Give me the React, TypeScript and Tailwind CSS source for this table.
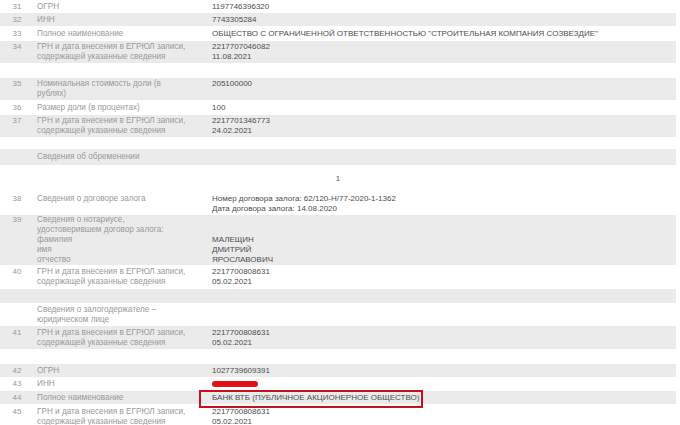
import React from 'react';

type Row = {
  n?: string;
  label?: string[];
  value?: string[];
  gray?: boolean;
  h: string;
  mark?: 'bar' | 'box';
  center?: string;
};

const NB = '\u00a0';

const ROWS: Row[] = [
  { n: '31', label: ['ОГРН'], value: ['1197746396320'], h: 'h-[13px]' },
  { n: '32', label: ['ИНН'], value: ['7743305284'], gray: true, h: 'h-[13px]' },
  { n: '33', label: ['Полное наименование'], value: ['ОБЩЕСТВО С ОГРАНИЧЕННОЙ ОТВЕТСТВЕННОСТЬЮ "СТРОИТЕЛЬНАЯ КОМПАНИЯ СОЗВЕЗДИЕ"'], h: 'h-[15px]' },
  { n: '34', label: ['ГРН и дата внесения в ЕГРЮЛ записи,', 'содержащей указанные сведения'], value: ['2217707046082', '11.08.2021'], gray: true, h: 'h-[22px]' },
  { h: 'h-[15px]' },
  { n: '35', label: ['Номинальная стоимость доли (в', 'рублях)'], value: ['205100000', NB], gray: true, h: 'h-[22px]' },
  { n: '36', label: ['Размер доли (в процентах)'], value: ['100'], h: 'h-[15px]' },
  { n: '37', label: ['ГРН и дата внесения в ЕГРЮЛ записи,', 'содержащей указанные сведения'], value: ['2217701346773', '24.02.2021'], gray: true, h: 'h-[22px]' },
  { h: 'h-[12px]' },
  { label: ['Сведения об обременении'], gray: true, h: 'h-[16px]' },
  { center: '1', h: 'h-[27px]' },
  { n: '38', label: ['Сведения о договоре залога', NB], value: ['Номер договора залога: 62/120-Н/77-2020-1-1362', 'Дата договора залога: 14.08.2020'], h: 'h-[23px]' },
  { n: '39', label: ['Сведения о нотариусе,', 'удостоверившем договор залога:', 'фамилия', 'имя', 'отчество'], value: [NB, NB, 'МАЛЕЩИН', 'ДМИТРИЙ', 'ЯРОСЛАВОВИЧ'], gray: true, h: 'h-[50px]' },
  { n: '40', label: ['ГРН и дата внесения в ЕГРЮЛ записи,', 'содержащей указанные сведения'], value: ['2217700808631', '05.02.2021'], h: 'h-[24px]' },
  { gray: true, h: 'h-[14px]' },
  { label: ['Сведения о залогодержателе –', 'юридическом лице'], h: 'h-[23px]' },
  { n: '41', label: ['ГРН и дата внесения в ЕГРЮЛ записи,', 'содержащей указанные сведения'], value: ['2217700808631', '05.02.2021'], gray: true, h: 'h-[23px]' },
  { h: 'h-[15px]' },
  { n: '42', label: ['ОГРН'], value: ['1027739609391'], gray: true, h: 'h-[13px]' },
  { n: '43', label: ['ИНН'], mark: 'bar', h: 'h-[14px]' },
  { n: '44', label: ['Полное наименование'], value: ['БАНК ВТБ (ПУБЛИЧНОЕ АКЦИОНЕРНОЕ ОБЩЕСТВО)'], mark: 'box', gray: true, h: 'h-[13px]' },
  { n: '45', label: ['ГРН и дата внесения в ЕГРЮЛ записи,', 'содержащей указанные сведения'], value: ['2217700808631', '05.02.2021'], h: 'h-[25px]' },
];

const App = () => {
  return (
    <div className="w-[680px] h-[425px] overflow-hidden bg-white font-['Liberation_Sans',Arial,sans-serif]">
      <div className="w-[676px] flex flex-col">
        {ROWS.map((row, i) => {
          const lines = Math.max(row.label?.length ?? 0, row.value?.length ?? 0);
          return (
            <div
              key={i}
              className={`flex items-center shrink-0 leading-[10px] ${row.h} ${row.gray ? 'bg-[#ebebeb]' : 'bg-white'}`}
            >
              {row.center ? (
                <div className="flex-1 text-center text-[8px] text-[#555555]">{row.center}</div>
              ) : (
                <>
                  <div className="w-[37px] pr-[3px] text-center text-[8px] text-[#9a9a9a]">
                    {row.n &&
                      Array.from({ length: lines }).map((_, j) => (
                        <div key={j}>{j === 0 ? row.n : NB}</div>
                      ))}
                  </div>
                  <div className="w-[175px] text-[8.2px] text-[#9a9a9a]">
                    {row.label?.map((l, j) => (
                      <div key={j} className="whitespace-nowrap">{l}</div>
                    ))}
                  </div>
                  <div className="flex-1 text-[8px] text-[#4d4d4d] relative">
                    {row.value?.map((v, j) => (
                      <div key={j} className="whitespace-nowrap">{v}</div>
                    ))}
                    {row.mark === 'bar' && <div className="w-[46px] h-[6px] rounded-full bg-[#e3101a]" />}
                    {row.mark === 'box' && (
                      <div className="absolute left-[-13px] top-[-3px] w-[224px] h-[18px] border-2 border-[#c4121e]" />
                    )}
                  </div>
                </>
              )}
            </div>
          );
        })}
      </div>
    </div>
  );
};

export default App;
